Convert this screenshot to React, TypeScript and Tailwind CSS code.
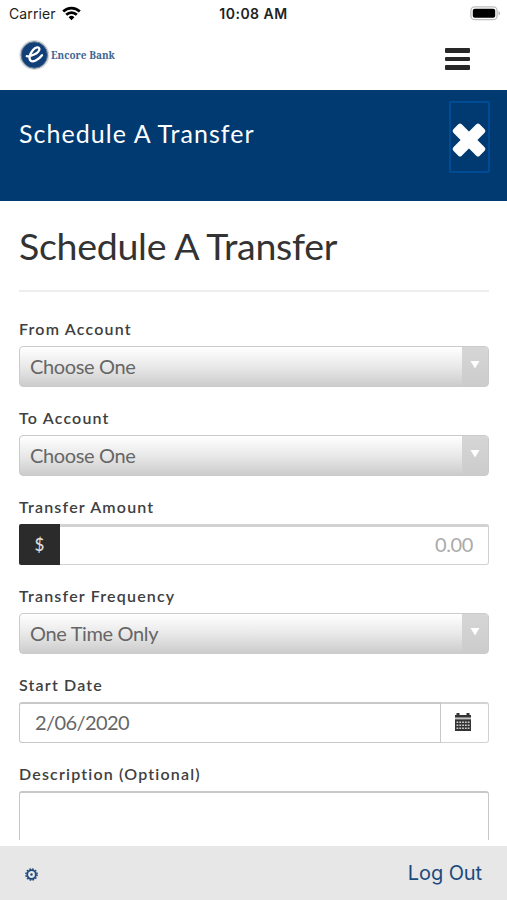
import { useState } from 'react'
import type { ReactNode } from 'react'

function Field({ label, children }: { label: string; children: ReactNode }) {
  return (
    <div className="mb-6">
      <label className="block h-6 text-[16px] leading-[13px] font-semibold tracking-[1.18px] text-[#404040]">{label}</label>
      {children}
    </div>
  )
}

function SelectBox({ value }: { value: string }) {
  return (
    <button className="flex h-[41px] w-full overflow-hidden rounded-[4px] border border-[#cbcbcb] bg-linear-to-b from-white via-[#e9e9e9] to-[#cccccc] text-left">
      <span className="flex-1 pl-[10px] text-[20px] leading-[39px] tracking-[-0.35px] text-[#666]">{value}</span>
      <span className="flex h-full w-[26px] justify-center bg-linear-to-b from-[#d6d6d6] to-[#cccccc] pt-[13px]">
        <svg width="10" height="9" viewBox="0 0 10 9">
          <path d="M0.5 1h9L5 8.5z" fill="#fff" />
        </svg>
      </span>
    </button>
  )
}

function StatusBar() {
  return (
    <div className="grid h-7 grid-cols-3 items-center font-['Inter',sans-serif] text-[14px] leading-7 text-[#222]">
      <div className="flex items-center gap-[6px] pl-[9px]">
        <span className="tracking-[0.1px]">Carrier</span>
        <svg width="19" height="15" viewBox="0 0 19 15" fill="none" stroke="#000" strokeWidth="2.7" className="-mt-[2px]">
          <path d="M1.2 5.5a11.8 11.8 0 0 1 16.6 0" />
          <path d="M4.2 8.8a7.5 7.5 0 0 1 10.6 0" />
          <path d="M9.5 14.2L6.6 11.3a4.1 4.1 0 0 1 5.8 0z" fill="#000" stroke="none" />
        </svg>
      </div>
      <div className="text-center font-semibold tracking-[0.5px]">10:08 AM</div>
      <div className="flex justify-end pr-[6px]">
        <svg width="31" height="15" viewBox="0 0 31 15" className="-mt-[2px]">
          <rect x="0.9" y="0.9" width="26.2" height="12.8" rx="3.8" fill="#fff" stroke="#bdbdbd" strokeWidth="1.3" />
          <rect x="2.8" y="2.8" width="22.4" height="9" rx="2" fill="#000" />
          <path d="M28.6 5v4.6c1.8-.8 1.8-3.8 0-4.6z" fill="#aaa" />
        </svg>
      </div>
    </div>
  )
}

function Logo() {
  return (
    <div className="flex items-center gap-[1px]">
      <svg width="31" height="32" viewBox="0 0 31 32">
        <circle cx="15.3" cy="16" r="15" fill="#d3d6d8" />
        <circle cx="15.3" cy="16" r="13.2" fill="#113f78" stroke="#687f98" strokeWidth="1" />
        <path
          d="M7.8 17.2C12 17.8 20.4 14 20.4 10c0-2.6-4-1.9-6.6 1.2-3 3.6-4.4 8.6-2.2 10.4 2.3 1.9 7.6-.4 11.4-5.4"
          fill="none"
          stroke="#fff"
          strokeWidth="2.3"
          strokeLinecap="round"
        />
      </svg>
      <span className="font-['Noto_Serif','DejaVu_Serif',serif] text-[10px] font-bold text-[#3f6691]">Encore Bank</span>
    </div>
  )
}

export default function App() {
  const [amount, setAmount] = useState('')
  const [startDate, setStartDate] = useState('2/06/2020')

  return (
    <div className="flex h-[900px] w-full flex-col overflow-hidden bg-white font-['Lato',sans-serif]">
      <StatusBar />
      <header className="flex h-[62px] items-start justify-between pl-[19px] pr-[37px]">
        <div className="pt-[11px]"><Logo /></div>
        <button className="flex flex-col gap-1 pt-5">
          <span className="h-[4.5px] w-[25px] rounded-[1px] bg-[#282828]" />
          <span className="h-[4.5px] w-[25px] rounded-[1px] bg-[#282828]" />
          <span className="h-[4.5px] w-[25px] rounded-[1px] bg-[#282828]" />
        </button>
      </header>

      <div className="flex h-[111px] items-start justify-between bg-[#003a70] pl-[19px] pr-[17px] pt-[11px]">
        <h2 className="pt-[16px] text-[25px] leading-8 tracking-[1.05px] text-white">Schedule A Transfer</h2>
        <button className="flex h-[72px] w-[41px] items-center justify-center rounded-[2px] border-2 border-[#004b96] pt-[6px] pr-[1px]">
          <svg width="36" height="36" viewBox="0 0 36 36" fill="#fff" className="shrink-0">
            <rect x="-0.6" y="12.1" width="37.2" height="11.8" rx="2.4" transform="rotate(45 18 18)" />
            <rect x="-0.6" y="12.1" width="37.2" height="11.8" rx="2.4" transform="rotate(-45 18 18)" />
          </svg>
        </button>
      </div>

      <main className="min-h-0 flex-1 overflow-hidden pl-[19px] pr-[18px]">
        <h1 className="mb-[30px] h-[91px] border-b-2 border-[#eee] pt-[21px] text-[37.5px] leading-[48px] tracking-[-0.28px] text-[#333]">
          Schedule A Transfer
        </h1>

        <Field label="From Account">
          <SelectBox value="Choose One" />
        </Field>
        <Field label="To Account">
          <SelectBox value="Choose One" />
        </Field>

        <Field label="Transfer Amount">
          <div className="flex h-[41px]">
            <span className="w-[41px] rounded-l-[2px] bg-[#2b2b2b] text-center text-[17px] leading-[41px] font-medium text-[#ddd]">$</span>
            <input
              value={amount}
              onChange={(e) => setAmount(e.target.value)}
              placeholder="0.00"
              className="min-w-0 flex-1 rounded-r-[3px] border border-t-[3px] border-l-0 border-[#d2d2d2] pr-[15px] pb-[3px] text-right text-[20px] tracking-[-0.4px] placeholder:text-[#aaa]"
            />
          </div>
        </Field>

        <Field label="Transfer Frequency">
          <SelectBox value="One Time Only" />
        </Field>

        <Field label="Start Date">
          <div className="flex h-[41px]">
            <input
              value={startDate}
              onChange={(e) => setStartDate(e.target.value)}
              className="min-w-0 flex-1 rounded-l-[3px] border border-t-2 border-[#c8c8c8] pb-[2px] pl-[15px] text-[20px] tracking-[-0.6px] text-[#666]"
            />
            <button className="flex w-[48px] items-center justify-center rounded-r-[3px] border border-l-0 border-t-2 border-[#d2d2d2]">
              <svg width="16" height="18" viewBox="0 0 16 18" className="-mt-[3px] mr-[3px]">
                <path d="M0 2h16v16H0z" fill="#333" />
                <path d="M1.5 0h3v3h-3zM11.5 0h3v3h-3z" fill="#333" />
                <path d="M0 5.4h16" stroke="#c4c4c4" strokeWidth="2" />
                <path d="M1.5 9.3h13M1.5 12.3h13M1.5 15.3h13" stroke="#ccc" strokeWidth="1.5" strokeDasharray="1.8 1" />
              </svg>
            </button>
          </div>
        </Field>

        <Field label="Description (Optional)">
          <div className="h-[49px] rounded-t-[3px] border border-t-2 border-b-0 border-[#c8c8c8]" />
        </Field>
      </main>

      <footer className="flex h-[54px] shrink-0 items-center justify-between bg-[#e7e7e7] pl-[25px] pr-[25px] font-['Inter',sans-serif] text-[#1c4a7d]">
        <svg width="13" height="13" viewBox="0 0 13 13" fill="none" stroke="#1c4a7d" className="mt-[2px]">
          <circle cx="6.5" cy="6.5" r="4.3" strokeWidth="1.7" />
          <circle cx="6.5" cy="6.5" r="5.6" strokeWidth="1.5" strokeDasharray="1.7 1.23" />
          <circle cx="6.5" cy="6.5" r="1.2" fill="#1c4a7d" stroke="none" />
        </svg>
        <button className="text-[20px] tracking-[-0.1px]">Log Out</button>
      </footer>
    </div>
  )
}
